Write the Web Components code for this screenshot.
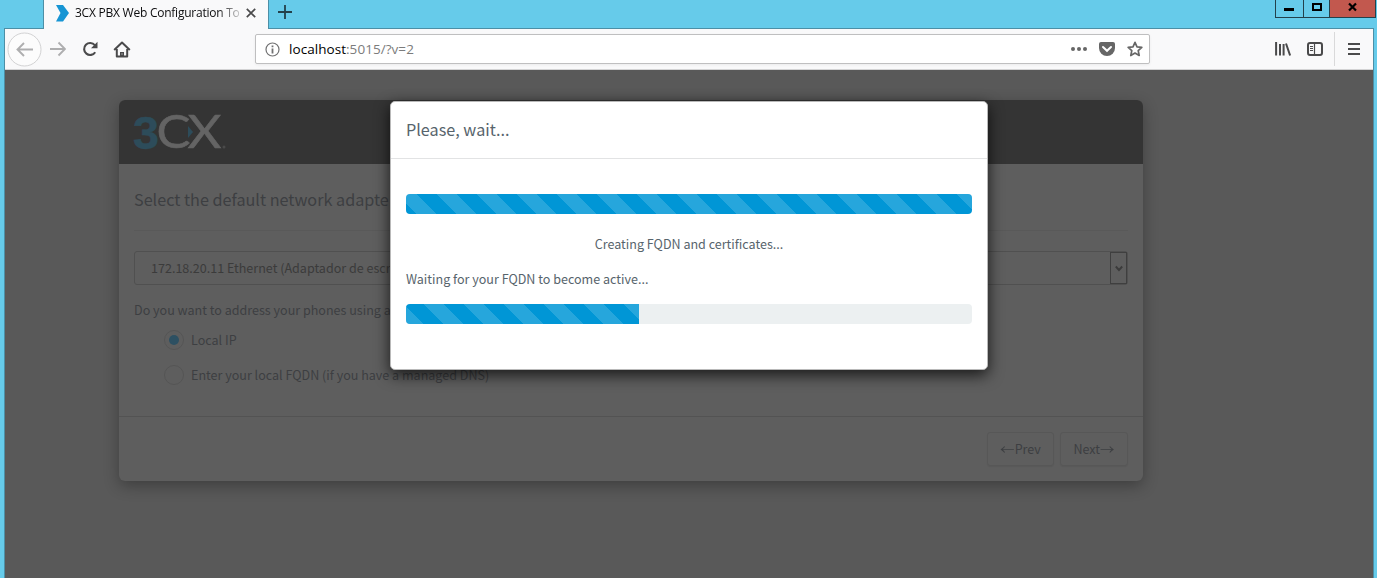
<!DOCTYPE html>
<html lang="en">
<head>
<meta charset="utf-8">
<title>3CX PBX Web Configuration Tool</title>
<style>
html,body{margin:0;height:100%;overflow:hidden;background:#66cbea}
body{font-family:"Noto Sans CJK SC","Open Sans",sans-serif}
</style>
</head>
<body>
<browser-window>
  <browser-tab slot="tab">3CX PBX Web Configuration To</browser-tab>
  <browser-toolbar slot="toolbar"></browser-toolbar>
  <setup-page>
    <setup-card>
      <span slot="title">Select the default network adapte</span>
      <select-box>172.18.20.11 Ethernet (Adaptador de escr</select-box>
      <p-label>Do you want to address your phones using a</p-label>
      <radio-option checked>Local IP</radio-option>
      <radio-option>Enter your local FQDN (if you have a managed DNS)</radio-option>
      <nav-button slot="foot" style="width:67px"><span class="arrow">←</span>Prev</nav-button>
      <nav-button slot="foot" style="width:68px">Next<span class="arrow">→</span></nav-button>
    </setup-card>
    <wait-dialog slot="dialog">
      <span slot="title">Please, wait...</span>
      <progress-bar style="--w:100%;--x:-9px"></progress-bar>
      <span slot="status">Creating FQDN and certificates...</span>
      <span slot="label">Waiting for your FQDN to become active...</span>
      <progress-bar slot="second" style="--w:233px;--x:18px"></progress-bar>
    </wait-dialog>
  </setup-page>
</browser-window>
<script>
const define=(name,html)=>customElements.define(name,class extends HTMLElement{
  constructor(){super();this.attachShadow({mode:'open'}).innerHTML=html;}
});

define('browser-window',`<style>
:host{display:flex;flex-direction:column;width:1377px;height:578px;background:#66cbea;overflow:hidden}
.top{display:flex;height:28px;padding-left:43px;align-items:flex-start}
.plus{width:14px;height:14px;margin:5px 0 0 9px}
.ctl{margin-left:auto;margin-right:1px;display:flex;height:18px;box-sizing:border-box;border:1px solid #23414b;border-top:0}
.ctl div{display:grid;place-items:center;border-left:1px solid #23414b;box-sizing:border-box;height:17px}
.ctl div:first-child{border-left:0}
.ctl svg{display:block}
.frame{flex:1;margin:0 3px 0 4px;border:1px solid #4c8fa6;border-bottom:0;display:flex;flex-direction:column;min-height:0}
</style>
<div class="top"><slot name="tab"></slot>
<svg class="plus" viewBox="0 0 14 14"><path d="M7 0v14M0 7h14" stroke="#23414b" stroke-width="1.8"/></svg>
<div class="ctl">
<div style="width:27px"><svg width="27" height="17"><path d="M8 8h10v3H8z"/></svg></div>
<div style="width:26px"><svg width="25" height="17"><path d="M9 4h8v6H9z" fill="none" stroke="#000" stroke-width="2"/></svg></div>
<div style="width:46px;background:#c2584e"><svg width="45" height="17"><path d="M19 3.500l7 7M26 3.500l-7 7" stroke="#000" stroke-width="2.2"/></svg></div>
</div></div>
<div class="frame"><slot name="toolbar"></slot><slot></slot></div>`);

define('browser-tab',`<style>
:host{display:flex;align-items:center;width:224px;height:29px;box-sizing:content-box;border:solid #4c8fa6;border-width:0 1px;background:#f9f9fa;position:relative;z-index:1}
.logo{margin-left:12px;flex:none}
.t{font:12px/18px "Open Sans","Noto Sans",sans-serif;letter-spacing:-.24px;color:#0c0c0d;margin:-3px 0 0 6px;width:167px;white-space:nowrap;overflow:hidden;-webkit-mask-image:linear-gradient(90deg,#000 143px,transparent 170px);mask-image:linear-gradient(90deg,#000 143px,transparent 170px)}
.x{margin:-3px 0 0 4px;flex:none}
</style>
<svg class="logo" width="13" height="17" style="margin-top:-3px"><path d="M0 0h7l6 8-6 8.500H0l4.500-8.500z" fill="#1795d4"/></svg>
<span class="t"><slot></slot></span>
<svg class="x" width="10" height="10"><path d="M.8.8l8.400 8.400M9.200.8L.8 9.200" stroke="#4a4a4b" stroke-width="1.7"/></svg>`);

define('browser-toolbar',`<style>
:host{display:flex;align-items:center;height:40px;background:#f9f9fa;border-bottom:1px solid #d3d3d4;flex:none}
svg{display:block;flex:none;fill:none;stroke:#4a4a4b;stroke-width:2}
.back{margin-left:2px}.fwd{margin-left:8px}.re{margin-left:16px}.home{margin-left:14px}
.url{display:flex;align-items:center;box-sizing:border-box;width:895px;height:30px;margin-left:124px;background:#fff;border:1px solid #bfbfc0;border-radius:2px;box-shadow:0 1px 3px rgba(0,0,0,.06)}
.url span{font:13.500px/20px "Open Sans","Noto Sans",sans-serif;letter-spacing:.05px;color:#7c7c7c;margin-left:9px;flex:1;margin-top:0}
b{font-weight:400;color:#000}
.sep{width:1px;height:34px;background:#d9d9da;margin-left:11px}
</style>
<svg class="back" width="35" height="35"><circle cx="17.500" cy="17.500" r="16.500" fill="#fcfcfc" stroke="#d2d2d3" stroke-width="1"/><path d="M26 17.500H10.500M17 11l-6.500 6.500L17 24" stroke="#aeaeaf" stroke-width="1.900"/></svg>
<svg class="fwd" width="16" height="16"><path d="M0 8h15M8.500 1.500L15 8l-6.500 6.500" stroke="#aeaeaf" stroke-width="1.900"/></svg>
<svg class="re" width="17" height="16"><path d="M13.200 11.200A6 6 0 1 1 12.800 4.200" stroke-width="2.100"/><path d="M15.500.8v6.400H9z" fill="#4a4a4b" stroke="none"/></svg>
<svg class="home" width="18" height="17"><path d="M1.200 9L9 1.500 16.800 9" stroke-linejoin="round"/><path d="M3.800 8v7.500h10.400V8" stroke-linejoin="round"/><path d="M7 16v-5h4v5z" fill="#4a4a4b" stroke="none"/><path d="M9 12.500v1" stroke="#f9f9fa" stroke-width="1"/></svg>
<div class="url">
<svg width="15" height="15" style="margin-left:9px"><circle cx="7.500" cy="7.500" r="6.500" stroke="#717172" stroke-width="1.200"/><path d="M7.500 6.500v5M7.500 3.500v1.800" stroke="#717172" stroke-width="1.800"/></svg>
<span><b>localhost</b>:5015/?v=2</span>
<svg width="16" height="4"><g fill="#666" stroke="none"><circle cx="2" cy="2" r="2"/><circle cx="8" cy="2" r="2"/><circle cx="14" cy="2" r="2"/></g></svg>
<svg width="16" height="14" style="margin-left:12px"><path d="M2 0h12q2 0 2 2v4a8 8 0 0 1-16 0V2Q0 0 2 0z" fill="#666" stroke="none"/><path d="M4 5l4 3.800L12 5" stroke="#fff" stroke-linecap="round"/></svg>
<svg width="16" height="16" style="margin:0 6px 0 12px"><path d="M8 1.400l2 4.500 4.800.5-3.600 3.200 1 4.900L8 12l-4.200 2.500 1-4.900L1.200 6.400 6 5.900z" stroke="#666" stroke-width="1.700" stroke-linejoin="round"/></svg>
</div>
<svg width="16" height="14" style="margin-left:125px"><path d="M1.100 0v13.500M5 2v11.500M8.600 2v11.500M11 1.500l4.100 12"/></svg>
<svg width="16" height="14" style="margin-left:16px"><rect x="1" y="1" width="14" height="12" rx="2"/><path d="M7.500 1v12" stroke-width="1.200"/><path d="M3 4.500h3M3 6.500h3M3 8.500h3" stroke-width="1"/></svg>
<div class="sep"></div>
<svg width="12" height="12" style="margin-left:13px"><path d="M0 1h12M0 6h12M0 11h12"/></svg>`);

define('setup-page',`<style>
:host{display:grid;grid-template-columns:100%;flex:1;background:#595959;min-height:0;overflow:hidden;align-items:start}
::slotted(*){grid-area:1/1}
</style><slot></slot><slot name="dialog"></slot>`);

define('setup-card',`<style>
:host{display:flex;flex-direction:column;width:1024px;height:381px;margin:30px 0 0 114px;background:#5e5e5e;border-radius:6px;box-shadow:0 5px 15px rgba(0,0,0,.3);color:#3d3f42;overflow:hidden}
header{height:64px;background:#343434;flex:none}
header svg{display:block;margin-left:14px}
.body{flex:1;padding:0 15px}
h1{font:400 16.200px/24px "Noto Sans CJK SC",sans-serif;margin:23px 0 19px;height:24px}
hr{border:0;border-top:1px solid #595959;margin:0 0 20px}
footer{height:65px;border-top:1px solid #535353;display:flex;justify-content:flex-end;gap:6px;padding:15px 15px 0;box-sizing:border-box}
</style>
<header><svg width="100" height="64">
<g font-family="Liberation Sans"><text x="0" y="48.500" font-size="47" font-weight="700" fill="#2d4c5a" stroke="#2d4c5a" stroke-width=".5" textLength="26" lengthAdjust="spacingAndGlyphs">3</text></g>
<g font-family="Lato" fill="#646464" stroke="#646464" stroke-width=".5"><text x="23.500" y="48" font-size="45.500" textLength="34" lengthAdjust="spacingAndGlyphs">C</text><text x="54.500" y="48" font-size="45.500" textLength="34" lengthAdjust="spacingAndGlyphs">X</text></g>
<path d="M55 26v12l5-6z" fill="#2d4c5a"/><circle cx="91" cy="47" r="1.500" fill="#4a4a4a"/></svg></header>
<div class="body"><h1><slot name="title"></slot></h1><hr><slot></slot></div>
<footer><slot name="foot"></slot></footer>`);

define('select-box',`<style>
:host{display:flex;box-sizing:border-box;height:34px;border:1px solid #505050;border-radius:3px;padding-left:16px;font-size:12.560px;line-height:32px;color:#3b3b3b}
i{margin-left:auto;width:17px;height:32px;box-sizing:border-box;border:1px solid #3f3f3f}
svg{display:block;margin:12px 3.500px}
</style><slot></slot><i><svg width="8" height="8"><path d="M.8 1.500L4 5l3.200-3.500" fill="none" stroke="#3b3b3b" stroke-width="1.900"/></svg></i>`);

define('p-label',`<style>:host{display:block;font-size:12.560px;line-height:20px;margin:15px 0 10px}</style><slot></slot>`);

define('radio-option',`<style>
:host{display:flex;align-items:center;height:20px;font-size:12.560px;line-height:20px;margin:0 0 15px 30px}
i{width:18px;height:18px;border:1px solid #555;border-radius:50%;margin-right:7px;display:grid;place-items:center}
:host([checked]) i::before{content:"";width:10px;height:10px;border-radius:50%;background:#2d5062}
</style><i></i><slot></slot>`);

define('nav-button',`<style>
:host{display:block;box-sizing:border-box;height:34px;border:1px solid #575757;border-radius:3px;text-align:center;font-size:12.560px;line-height:32px;white-space:nowrap;box-shadow:0 1px 1px rgba(0,0,0,.06)}
::slotted(.arrow){display:inline-block;transform:scaleX(1.15);margin:0 1px}
</style><slot></slot>`);

define('wait-dialog',`<style>
:host{display:block;box-sizing:border-box;width:598px;height:269px;margin:31px 0 0 385px;background:#fff;border:1px solid #b9b9b9;border-radius:5px;box-shadow:0 5px 15px rgba(0,0,0,.75);color:#57646c;z-index:1;font-size:12.560px;line-height:20px}
header{height:56px;border-bottom:1px solid #e2e3e4;padding-left:15px;font-size:16.200px;line-height:54px}
section{padding:35px 15px 0}
.s{text-align:center;margin:20px 0 15px}.l{margin-bottom:15px}
</style><header><slot name="title"></slot></header>
<section><slot></slot><div class="s"><slot name="status"></slot></div><div class="l"><slot name="label"></slot></div><slot name="second"></slot></section>`);

define('progress-bar',`<style>
:host{display:block;height:20px;background:#ecf0f1;border-radius:4px;overflow:hidden}
div{height:20px;width:var(--w);background:linear-gradient(45deg,rgba(255,255,255,.15) 25%,transparent 25%,transparent 50%,rgba(255,255,255,.15) 50%,rgba(255,255,255,.15) 75%,transparent 75%) var(--x) 0/40px 40px #0096d6}
</style><div></div>`);
</script>
</body>
</html>
